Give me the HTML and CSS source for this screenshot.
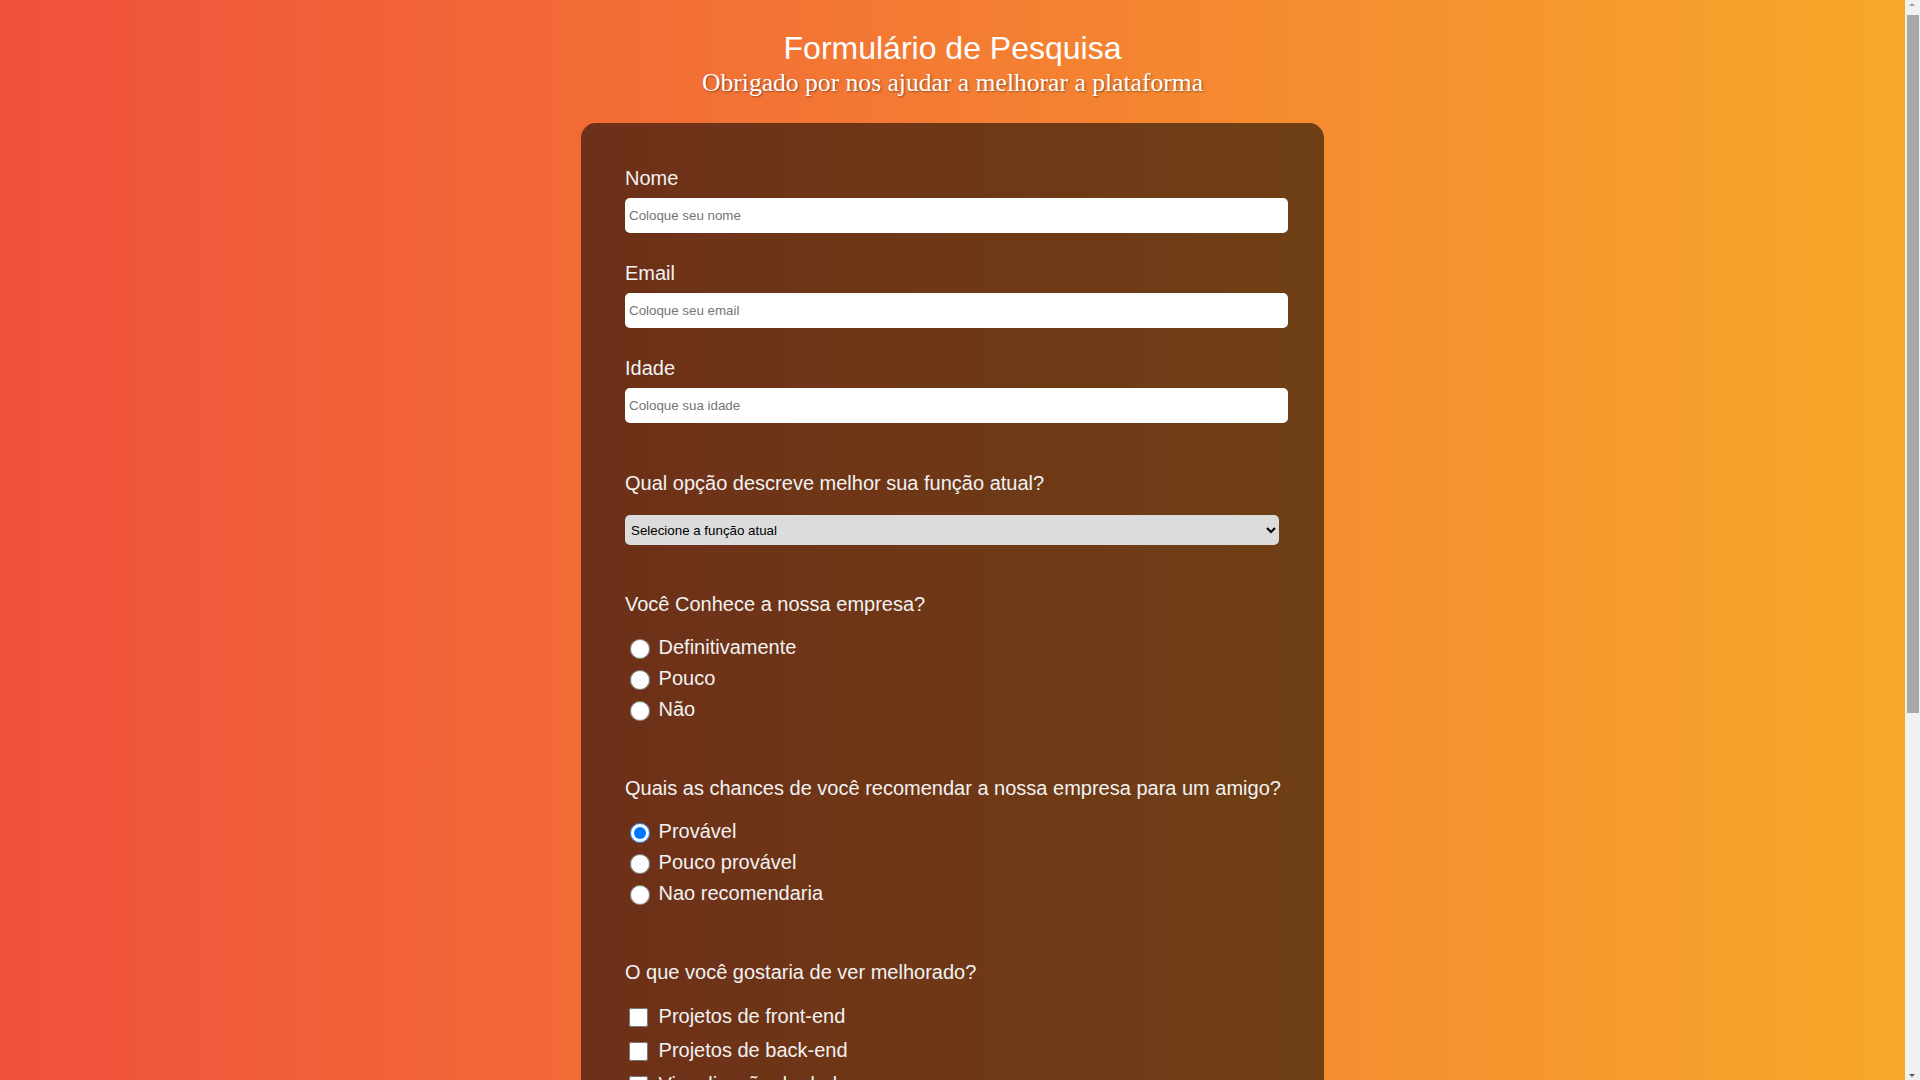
FILE: index.html
```html
<!DOCTYPE html>
<html lang="pt-BR">
<head>
<meta charset="utf-8">
<title>Formulário de Pesquisa</title>
<link rel="stylesheet" href="styles.css">
</head>
<body>
<div class="page">
  <header class="header">
    <h1 class="title">Formulário de Pesquisa</h1>
    <p class="subtitle">Obrigado por nos ajudar a melhorar a plataforma</p>
  </header>
  <main class="card">
    <form class="form">
      <div class="field">
        <label class="label" for="name">Nome</label>
        <input class="text-input" id="name" type="text" placeholder="Coloque seu nome">
      </div>
      <div class="field">
        <label class="label" for="email">Email</label>
        <input class="text-input" id="email" type="email" placeholder="Coloque seu email">
      </div>
      <div class="field">
        <label class="label" for="age">Idade</label>
        <input class="text-input" id="age" type="text" placeholder="Coloque sua idade">
      </div>
      <div class="field field-select">
        <label class="label" for="role">Qual opção descreve melhor sua função atual?</label>
        <select class="select" id="role">
          <option>Selecione a função atual</option>
          <option>Estudante</option>
          <option>Trabalho em tempo integral</option>
          <option>Aprendendo em tempo integral</option>
          <option>Prefiro não dizer</option>
          <option>Outro</option>
        </select>
      </div>
      <div class="field field-choice">
        <p class="label">Você Conhece a nossa empresa?</p>
        <label class="opt"><input class="radio" type="radio" name="conhece"> Definitivamente</label>
        <label class="opt"><input class="radio" type="radio" name="conhece"> Pouco</label>
        <label class="opt"><input class="radio" type="radio" name="conhece"> Não</label>
      </div>
      <div class="field field-choice">
        <p class="label">Quais as chances de você recomendar a nossa empresa para um amigo?</p>
        <label class="opt"><input class="radio" type="radio" name="recomenda" checked> Provável</label>
        <label class="opt"><input class="radio" type="radio" name="recomenda"> Pouco provável</label>
        <label class="opt"><input class="radio" type="radio" name="recomenda"> Nao recomendaria</label>
      </div>
      <div class="field field-choice field-check">
        <p class="label">O que você gostaria de ver melhorado?</p>
        <label class="opt opt-check"><input class="checkbox" type="checkbox"> Projetos de front-end</label>
        <label class="opt opt-check"><input class="checkbox" type="checkbox"> Projetos de back-end</label>
        <label class="opt opt-check"><input class="checkbox" type="checkbox"> Visualização de dados</label>
        <label class="opt opt-check"><input class="checkbox" type="checkbox"> Desafios</label>
        <label class="opt opt-check"><input class="checkbox" type="checkbox"> Comunidade open source</label>
        <label class="opt opt-check"><input class="checkbox" type="checkbox"> Vídeos</label>
        <label class="opt opt-check"><input class="checkbox" type="checkbox"> Cursos adicionais</label>
      </div>
      <div class="field">
        <label class="label label-comment" for="comments">Algum comentário ou sugestão?</label>
        <textarea class="textarea" id="comments" placeholder="Escreva seu comentário aqui..."></textarea>
      </div>
      <button class="submit" type="submit">Enviar</button>
    </form>
  </main>
</div>
<div class="scrollbar" aria-hidden="true">
  <span class="sb-arrow sb-up"></span>
  <span class="sb-thumb"></span>
  <span class="sb-arrow sb-down"></span>
</div>
</body>
</html>
```
FILE: styles.css
```css
* {
  box-sizing: border-box;
}

html,
body {
  margin: 0;
}

body {
  font-family: "Liberation Sans", Arial, sans-serif;
  background: #f1f1f1;
  color: #f2f2f2;
}

.page {
  margin-right: 15px;
  padding: 30px 0 70px;
  background: linear-gradient(to right, #f0503c, #f7a82a);
}

.header {
  text-align: center;
  color: #ffffff;
}

.title {
  margin: 0;
  font-size: 32px;
  font-weight: 400;
  line-height: normal;
}

.subtitle {
  margin: 1px 0 0;
  font-family: "Liberation Serif", "Times New Roman", serif;
  font-size: 25.6px;
  line-height: normal;
  text-shadow: 1px 1px 2px rgba(0, 0, 0, 0.4);
}

.card {
  display: block;
  width: 743px;
  margin: 25px auto 0;
  padding: 44px;
  background: rgba(0, 0, 0, 0.55);
  border-radius: 15px;
}

.form {
  margin: 0;
}

.field {
  margin-bottom: 29px;
}

.label {
  display: block;
  margin: 0 0 8px;
  font-size: 20px;
  line-height: 23px;
  white-space: nowrap;
}

.text-input {
  display: block;
  width: 663px;
  height: 35px;
  padding: 0 4px;
  border: 0;
  border-radius: 5px;
  background: #ffffff;
  font-family: "Liberation Sans", Arial, sans-serif;
  font-size: 13.333px;
  color: #222;
}

.text-input::placeholder,
.textarea::placeholder {
  color: #757575;
}

.field-select {
  margin-top: 49px;
  margin-bottom: 48px;
}

.field-select .label {
  margin-bottom: 20px;
}

.select {
  display: block;
  width: 654px;
  height: 30px;
  padding: 0 2px;
  border: 0;
  outline: none;
  border-radius: 5px;
  background-color: #dcdcdc;
  font-family: "Liberation Sans", Arial, sans-serif;
  font-size: 13.333px;
  color: #000;
}

.field-choice {
  margin-bottom: 52px;
}

.field-choice .label {
  margin-bottom: 16px;
}

.field-check .label {
  margin-bottom: 15px;
}

.opt {
  display: block;
  font-size: 20px;
  line-height: 31px;
  white-space: nowrap;
}

.opt-check {
  line-height: 34px;
}

.radio {
  width: 20px;
  height: 20px;
  margin: 0 3px 0 5px;
  vertical-align: middle;
}

.checkbox {
  width: 19px;
  height: 19px;
  margin: 0 5px 0 4px;
  vertical-align: middle;
}

.label-comment {
  margin-bottom: 16px;
}

.textarea {
  display: block;
  width: 663px;
  height: 120px;
  padding: 4px;
  border: 0;
  border-radius: 5px;
  resize: vertical;
  font-family: "Liberation Sans", Arial, sans-serif;
  font-size: 13.333px;
}

.submit {
  display: block;
  width: 663px;
  height: 40px;
  border: 0;
  border-radius: 5px;
  background: #f7a82a;
  color: #ffffff;
  font-family: "Liberation Sans", Arial, sans-serif;
  font-size: 18px;
  cursor: pointer;
}

/* imitation of the classic browser scrollbar seen in the reference */
.scrollbar {
  position: fixed;
  top: 0;
  right: 0;
  bottom: 0;
  width: 15px;
  display: flex;
  flex-direction: column;
  background: #f1f1f1;
}

.sb-arrow {
  position: relative;
  flex: 0 0 15px;
}

.sb-arrow::after {
  content: "";
  position: absolute;
  left: 4px;
  border-left: 3.5px solid transparent;
  border-right: 3.5px solid transparent;
}

.sb-up::after {
  top: 3px;
  border-bottom: 3.5px solid #a3a3a3;
}

.sb-down {
  margin-top: auto;
}

.sb-down::after {
  bottom: 3px;
  border-top: 3.5px solid #505050;
}

.sb-thumb {
  flex: 0 0 698px;
  margin: 0 1px 0 2px;
  background: #a8a8a8;
}
```
